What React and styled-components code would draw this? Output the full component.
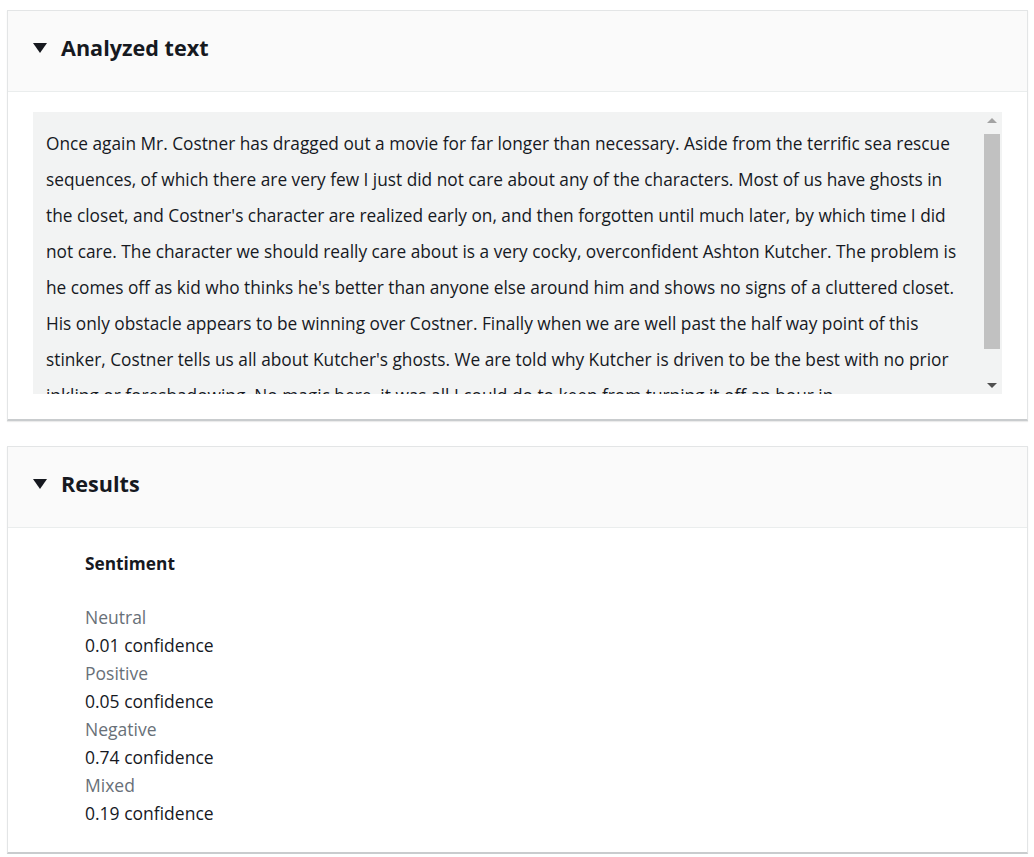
import React from "react";
import styled, { createGlobalStyle } from "styled-components";

const Global = createGlobalStyle`
  html, body { margin: 0; padding: 0; background: #ffffff; }
  body { font-family: "Open Sans", "Noto Sans", sans-serif; color: #16191f; }
`;

const Page = styled.div`
  display: flex;
  flex-direction: column;
  gap: 25px;
  padding: 10px 6px 0 7px;
  width: 1034px;
  box-sizing: border-box;
`;

const Card = styled.section`
  background: #ffffff;
  border: 1px solid #e3e5e6;
  border-bottom: 2px solid #c9ccce;
  box-shadow: 0 1px 1px rgba(0, 0, 0, 0.08);
`;

const Header = styled.div`
  display: flex;
  align-items: center;
  gap: 14px;
  height: 72px;
  padding: 0 25px 8px 25px;
  background: #fafafa;
  border-bottom: 1px solid #eaeded;
`;

const Caret = styled.span`
  width: 0;
  height: 0;
  border-left: 7px solid transparent;
  border-right: 7px solid transparent;
  border-top: 10px solid #16191f;
  margin-top: 2px;
`;

const Title = styled.h2`
  margin: 0;
  font-size: 21.6px;
  font-weight: 700;
  color: #16191f;
`;

const Body = styled.div`
  padding: ${(p) => p.$pad};
`;

const TextBox = styled.div`
  display: flex;
  height: 282px;
  background: #f2f3f3;
`;

const TextContent = styled.div`
  flex: 1;
  overflow: hidden;
  padding: 14px 22px 0 13px;
  font-size: 17.3px;
  line-height: 36px;
  color: #16191f;
`;

const ScrollTrack = styled.div`
  width: 17px;
  margin-right: 2px;
  display: flex;
  flex-direction: column;
  align-items: center;
`;

const Arrow = styled.span`
  height: 17px;
  display: flex;
  align-items: center;
  justify-content: center;
  &::before {
    content: "";
    border-left: 5px solid transparent;
    border-right: 5px solid transparent;
    ${(p) => (p.$up ? "border-bottom: 5px solid #a3a3a3;" : "border-top: 5px solid #505050;")}
  }
`;

const Spacer = styled.span`
  flex: 1;
`;

const Thumb = styled.div`
  width: 16px;
  height: 215px;
  margin-top: 5px;
  background: #c1c1c1;
`;

const Section = styled.div`
  display: flex;
  flex-direction: column;
  padding-left: 77px;
`;

const SectionTitle = styled.h3`
  margin: 0 0 27px 0;
  font-size: 17.3px;
  font-weight: 700;
  line-height: 24px;
  color: #16191f;
`;

const Label = styled.div`
  font-size: 17.5px;
  line-height: 28px;
  color: ${(p) => (p.$muted ? "#687078" : "#16191f")};
`;

const review =
  "Once again Mr. Costner has dragged out a movie for far longer than necessary. Aside from the terrific sea rescue sequences, of which there are very few I just did not care about any of the characters. Most of us have ghosts in the closet, and Costner's character are realized early on, and then forgotten until much later, by which time I did not care. The character we should really care about is a very cocky, overconfident Ashton Kutcher. The problem is he comes off as kid who thinks he's better than anyone else around him and shows no signs of a cluttered closet. His only obstacle appears to be winning over Costner. Finally when we are well past the half way point of this stinker, Costner tells us all about Kutcher's ghosts. We are told why Kutcher is driven to be the best with no prior inkling or foreshadowing. No magic here, it was all I could do to keep from turning it off an hour in.";

const results = [
  ["Neutral", "0.01"],
  ["Positive", "0.05"],
  ["Negative", "0.74"],
  ["Mixed", "0.19"],
];

export default function App() {
  return (
    <>
      <Global />
      <Page>
        <Card>
          <Header>
            <Caret />
            <Title>Analyzed text</Title>
          </Header>
          <Body $pad="20px 25px 25px 25px">
            <TextBox>
              <TextContent>{review}</TextContent>
              <ScrollTrack>
                <Arrow $up />
                <Thumb />
                <Spacer />
                <Arrow />
              </ScrollTrack>
            </TextBox>
          </Body>
        </Card>
        <Card>
          <Header>
            <Caret />
            <Title>Results</Title>
          </Header>
          <Body $pad="24px 25px 25px 0">
            <Section>
              <SectionTitle>Sentiment</SectionTitle>
              {results.map(([name, value]) => (
                <React.Fragment key={name}>
                  <Label $muted>{name}</Label>
                  <Label>{value} confidence</Label>
                </React.Fragment>
              ))}
            </Section>
          </Body>
        </Card>
      </Page>
    </>
  );
}
